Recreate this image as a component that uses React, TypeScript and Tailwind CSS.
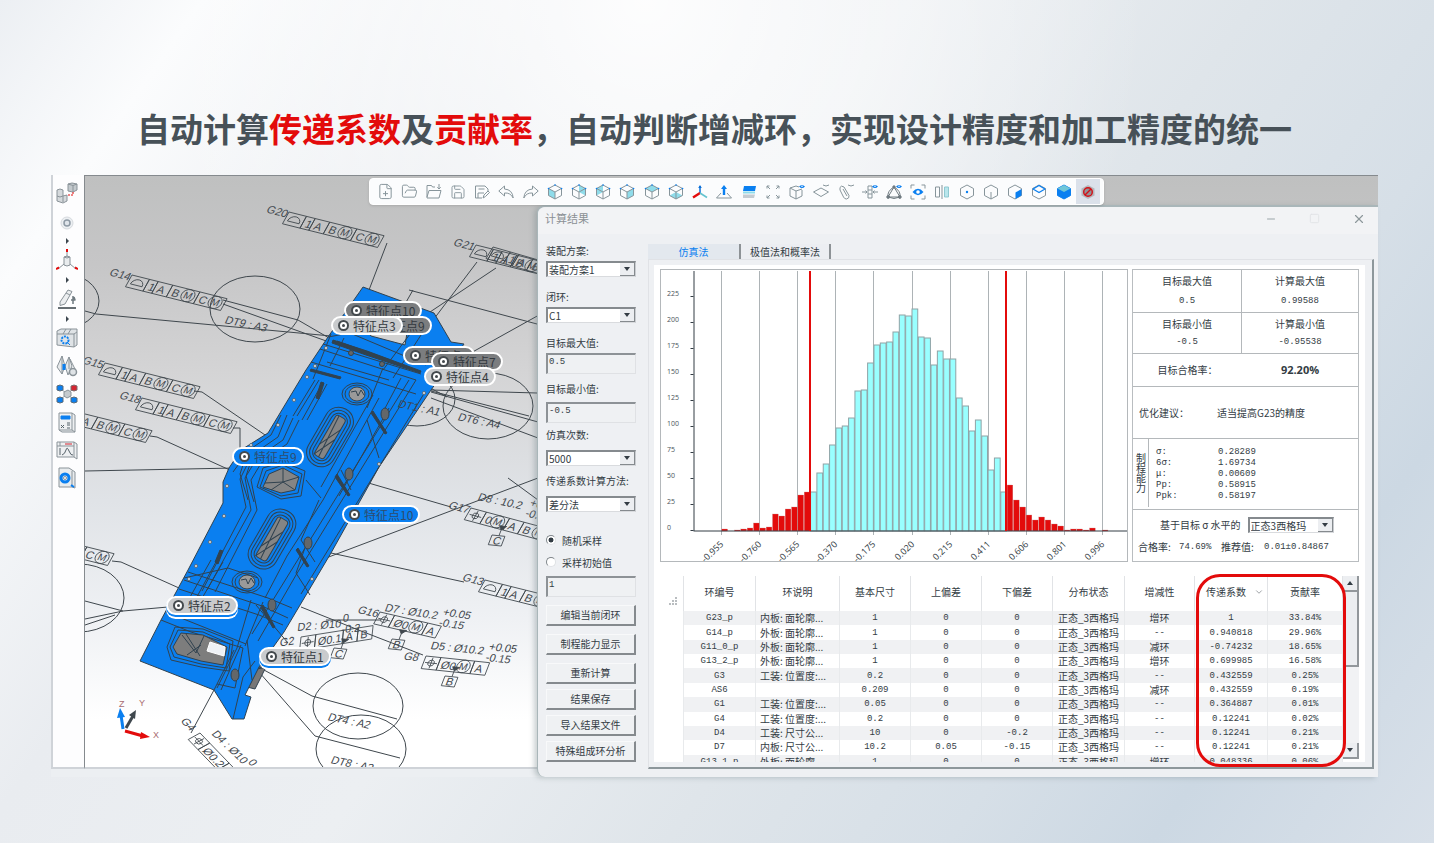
import React, { useState } from "react";
import { ChevronDown, FilePlus, FolderOpen, Save, Minus, Square, X } from "lucide-react";

const HIST = [
  2, 0, 1, 2, 3, 8, 3, 4, 17, 15, 22, 24, 36, 39, 39, 58, 67, 86, 103, 105, 113, 140, 141, 168, 186, 188, 189, 199,
  216, 215, 222, 194, 193, 166, 180, 172, 172, 133, 125, 100, 111, 95, 61, 73, 39, 46, 31, 24, 16, 11, 14, 11, 7, 5, 1,
  2, 2, 1, 3, 0, 1,
];
const X_LABELS = ["-0.955", "-0.760", "-0.565", "-0.370", "-0.175", "0.020", "0.215", "0.411", "0.606", "0.801", "0.996"];
const Y_LABELS = [0, 25, 50, 75, 100, 125, 150, 175, 200, 225];

const COLUMNS = ["环编号", "环说明", "基本尺寸", "上偏差", "下偏差", "分布状态", "增减性", "传递系数", "贡献率"];
const ROWS = [
  ["G23_p", "内板: 面轮廓...", "1", "0", "0", "正态_3西格玛", "增环", "1", "33.84%"],
  ["G14_p", "外板: 面轮廓...", "1", "0", "0", "正态_3西格玛", "--", "0.940818", "29.96%"],
  ["G11_0_p", "外板: 面轮廓...", "1", "0", "0", "正态_3西格玛", "减环", "-0.74232", "18.65%"],
  ["G13_2_p", "外板: 面轮廓...", "1", "0", "0", "正态_3西格玛", "增环", "0.699985", "16.58%"],
  ["G3", "工装: 位置度:...", "0.2", "0", "0", "正态_3西格玛", "--", "0.432559", "0.25%"],
  ["AS6", "", "0.209", "0", "0", "正态_3西格玛", "减环", "0.432559", "0.19%"],
  ["G1", "工装: 位置度:...", "0.05", "0", "0", "正态_3西格玛", "--", "0.364887", "0.01%"],
  ["G4", "工装: 位置度:...", "0.2", "0", "0", "正态_3西格玛", "--", "0.12241", "0.02%"],
  ["D4", "工装: 尺寸公...", "10", "0", "-0.2", "正态_3西格玛", "--", "0.12241", "0.21%"],
  ["D7", "内板: 尺寸公...", "10.2", "0.05", "-0.15", "正态_3西格玛", "--", "0.12241", "0.21%"],
  ["G13_1_p", "外板: 面轮廓...", "1", "0", "0", "正态_3西格玛", "增环", "0.048336", "0.06%"],
];

/* ---------- toolbar icons ---------- */

function Ico({ children }: { children: React.ReactNode }) {
  return (
    <svg viewBox="0 0 16 16" className="h-4 w-4" fill="none" stroke="#87959b" strokeWidth={1} strokeLinejoin="round">
      {children}
    </svg>
  );
}

const HEX = "M8 1 14.5 4.5V11.5L8 15 1.5 11.5V4.5Z";

function Cube({ face }: { face: string }) {
  return (
    <Ico>
      <path d={face} fill="#8fdcea" stroke="none" />
      <path d={HEX} />
      <path d="M1.5 4.5 8 8 14.5 4.5M8 8V15" />
      <path d="M8 1h.1M1.5 4.5h.1M14.5 4.5h.1" stroke="#0a7ff0" strokeWidth={1.6} strokeLinecap="round" />
    </Ico>
  );
}

function Eye() {
  return (
    <>
      <path d="M10 2.5q3-3 6 0q-3 3-6 0Z" fill="#0a7ff0" stroke="none" />
      <circle cx="13" cy="2.3" r=".8" fill="#fff" stroke="none" />
    </>
  );
}

const TOOLS: { name: string; icon: React.ReactNode }[] = [
  { name: "新建", icon: <FilePlus size={17} strokeWidth={1.4} color="#87959b" /> },
  { name: "打开", icon: <FolderOpen size={17} strokeWidth={1.4} color="#87959b" /> },
  {
    name: "导入",
    icon: (
      <Ico>
        <path d="M9 3H6.500L5.500 1.500H1V14h12l2-7.500H3L1 13M13 0v5M11.300 3.300 13 5l1.700-1.700" />
      </Ico>
    ),
  },
  { name: "保存", icon: <Save size={16} strokeWidth={1.4} color="#87959b" /> },
  { name: "另存为", icon: <Ico><path d="M8 14H1.500V2H11l3 3v2M4 14V9h6M4.500 5h6M9 14l1-3 4-4 1.500 1.500-4 4Z" /></Ico> },
  { name: "撤销", icon: <Ico><path d="M6.500 2 .8 7l5.700 5V9q6-.5 8.700 5Q14.500 5.500 6.500 5Z" /></Ico> },
  { name: "重做", icon: <Ico><path d="M9.500 2l5.700 5-5.700 5V9Q3.500 8.500.8 14 1.500 5.500 9.500 5Z" /></Ico> },
  { name: "左视图", icon: <Cube face="M1.5 4.5 8 8V15L1.500 11.500Z" /> },
  { name: "后视图", icon: <Cube face="M8 1 14.500 4.500V11.500L8 8Z" /> },
  { name: "侧视图", icon: <Cube face="M1.500 4.500 8 1V8L1.500 11.500Z" /> },
  { name: "右视图", icon: <Cube face="M14.500 4.500 8 8V15L14.500 11.500Z" /> },
  { name: "俯视图", icon: <Cube face="M8 1 14.500 4.500 8 8 1.500 4.500Z" /> },
  { name: "仰视图", icon: <Cube face="M8 8 14.500 11.500 8 15 1.500 11.500Z" /> },
  {
    name: "坐标系",
    icon: (
      <Ico>
        <path d="M8 9V2" stroke="#0a6fd8" strokeWidth={1.500} />
        <path d="M6.200 4 8 1l1.800 3Z" fill="#0a6fd8" stroke="none" />
        <path d="M8 9 1 13.500" stroke="#e30b0b" strokeWidth={2.400} />
        <path d="M8 9l7 4.500" stroke="#63c3cf" strokeWidth={1.600} />
      </Ico>
    ),
  },
  {
    name: "法向",
    icon: (
      <Ico>
        <path d="M5 9l-4.500 5h15L11 9" />
        <path d="M8 11V3" stroke="#0a7ff0" strokeWidth={2.400} />
        <path d="M5 5 8 1l3 4Z" fill="#0a7ff0" stroke="none" />
      </Ico>
    ),
  },
  {
    name: "剖切",
    icon: (
      <Ico>
        <path d="M3 2h12l-1 5H2Z" fill="#0a7ff0" stroke="none" />
        <path d="M2 7.500h12v2H2Z" fill="#8fdcea" stroke="none" />
        <path d="M2 10.500h12L13 14H2Z" fill="#c5ccd2" stroke="none" />
      </Ico>
    ),
  },
  { name: "全屏", icon: <Ico><path d="M5 5 2 2m0 2.500V2h2.500M11 5l3-3m-2.500 0H14v2.500M5 11l-3 3m0-2.500V14h2.500M11 11l3 3m-2.500 0H14v-2.500" /></Ico> },
  { name: "显示实体", icon: <Ico><path d="M7 2 1 4v8l6 3 6-3V6M1 4l6 3 6-2M7 7v8M7 2l3 1" /><Eye /></Ico> },
  { name: "显示平面", icon: <Ico><path d="M8 4 .5 8 8 12.500 15.500 8Z" /><path d="M10 1q3 2 6 0" /></Ico> },
  { name: "显示连接", icon: <Ico><path d="M2 3.500q1-2.500 4-.5l5 8.500q.5 3-2.500 3.500-2 0-3-2L2 6Z" /><path d="M5 5l4 7M10 1q3 2 6 0" /></Ico> },
  { name: "显示公差", icon: <Ico><path d="M6 2h4v12H6ZM6 6h4M6 10h4M0 8h5M3.500 6.500 5 8 3.500 9.500M16 8h-5M12.500 6.500 11 8l1.500 1.500" /><Eye /></Ico> },
  {
    name: "显示特征",
    icon: (
      <Ico>
        <path d="M8 3 2 13h12ZM2 13Q1 7 8 3q7 4 6 10M2 13q6 3 12 0" stroke="#6f7a80" />
        <g fill="#6f7a80" stroke="#6f7a80"><circle cx="8" cy="3" r="1.200" /><circle cx="2.200" cy="13" r="1.400" /><circle cx="13.800" cy="13" r="1.400" /></g>
        <Eye />
      </Ico>
    ),
  },
  {
    name: "聚焦",
    icon: (
      <Ico>
        <path d="M1 4.500V1h3.500M11.500 1H15v3.500M15 11.500V15h-3.500M4.500 15H1v-3.500" />
        <path d="M2.500 8Q8 1.500 13.500 8 8 14.500 2.500 8Z" fill="#0a7ff0" stroke="none" />
        <circle cx="8" cy="8" r="1.800" fill="#fff" stroke="none" />
      </Ico>
    ),
  },
  {
    name: "镜像",
    icon: (
      <Ico>
        <path d="M1.500 3h4v10h-4ZM8 1v14" />
        <path d="M10.500 3h4v10h-4Z" fill="#b9e6ec" stroke="#8fc9d1" />
      </Ico>
    ),
  },
  { name: "点", icon: <Ico><path d={HEX} /><circle cx="8" cy="8" r="1.200" fill="#0a7ff0" stroke="none" /></Ico> },
  { name: "线", icon: <Ico><path d={HEX} /><path d="M8 8v7" /></Ico> },
  { name: "面", icon: <Ico><path d={HEX} /><path d="M8.500 8.500 14.500 5v6.500l-6 3.500Z" fill="#0a7ff0" stroke="none" /></Ico> },
  { name: "顶面", icon: <Ico><path d={HEX} /><path d="M8 1.500 14 5 8 8.500 2 5Z" stroke="#0a7ff0" strokeWidth={1.300} /></Ico> },
  {
    name: "实体",
    icon: (
      <Ico>
        <path d={HEX} fill="#0a7ff0" stroke="#0a7ff0" />
        <path d="M8 1 14.500 4.500 8 8 1.500 4.500Z" fill="#6fc6d8" stroke="none" />
      </Ico>
    ),
  },
  {
    name: "禁用选择",
    icon: (
      <Ico>
        <path d="M8 1 14.500 4.500v7L8 15l-6.500-3.500v-7Z" fill="#b4b8bc" stroke="none" />
        <circle cx="8" cy="8" r="4.300" fill="#8f9498" stroke="#d40f16" strokeWidth={1.400} />
        <path d="M5 11l6-6" stroke="#d40f16" strokeWidth={1.400} />
      </Ico>
    ),
  },
];

function TopToolbar() {
  return (
    <div className="relative z-10 -ml-[168px] grid h-[27px] w-[735px] grid-cols-[repeat(30,minmax(0,1fr))] rounded-[4px] border border-white bg-[#fbfcfd] px-[3px] shadow-sm">
      {TOOLS.map((t, i) => (
        <button
          key={t.name}
          aria-label={t.name}
          className={`flex items-center justify-center ${i === TOOLS.length - 1 ? "bg-[#dbe1ea]" : ""}`}
        >
          {t.icon}
        </button>
      ))}
    </div>
  );
}

/* ---------- left tool strip ---------- */

function SideIcon({ label, children }: { label: string; children: React.ReactNode }) {
  return (
    <button aria-label={label} className="flex h-7 w-full items-center justify-center">
      <svg viewBox="0 0 22 22" className="h-[22px] w-[22px]" fill="none" stroke="#8a9399" strokeWidth={1} strokeLinejoin="round">
        {children}
      </svg>
    </button>
  );
}

function Flyout() {
  return (
    <span className="flex h-[11px] items-center justify-center">
      <span className="border-y-[3px] border-l-[3px] border-y-transparent border-l-[#3c464e]" />
    </span>
  );
}

function SideBar() {
  return (
    <aside className="mb-2 flex w-[33px] shrink-0 flex-col border-b-2 border-l-2 border-[#cfd3d8] bg-[#fdfdfe] pt-1 pr-[3px]">
      <SideIcon label="装配">
        <path d="M1 8l3-1 3 1v6l4-1v6l-4 2-6-2Z" fill="#d5d9dc" />
        <path d="M7 14l-3 1-3-1M7 20v-6" />
        <path d="M12 2l4-1 5 1v6l-4 2-5-1Z" fill="#c3c9cd" />
        <path d="M12 2l5 1.500L21 2M17 3.500V10" />
        <path d="M17 10v3h-5" stroke="#e30b0b" strokeDasharray="2 1" />
      </SideIcon>
      <SideIcon label="点">
        <circle cx="11" cy="13" r="6" fill="#eceff2" stroke="#d6dade" />
        <circle cx="11" cy="13" r="3" fill="#dfe4ea" stroke="#8e9aa5" strokeWidth={1.500} />
      </SideIcon>
      <Flyout />
      <SideIcon label="坐标">
        <path d="M8 8q3-2 6 0v8q-3 2-6 0Z" fill="#e9ecee" />
        <path d="M8 8q3 2 6 0M11 8V2M8 15l-6 5M14 15l6 5" />
        <path d="M11 0v3M0 20l3-1.500M22 20l-3-1.500" stroke="#e30b0b" strokeWidth={2} />
      </SideIcon>
      <Flyout />
      <SideIcon label="编辑">
        <path d="M4 14 12 2l4 1.500L9 16l-5 1.500Z" fill="#eceef0" />
        <path d="M10 5l4 2" />
        <path d="M2 20h18" stroke="#3f4a50" strokeWidth={1.600} />
        <path d="M17 8v8M15 12h4l-1-3" stroke="#6f7a80" strokeWidth={1.500} />
      </SideIcon>
      <Flyout />
      <SideIcon label="分析">
        <path d="M1 4 5 2h16v16l-3 2L1 18Z" fill="#dfe3e6" />
        <path d="M1 7h17l3-2M18 7v13M7 7l3-5M12 7l3-5" />
        <circle cx="9" cy="13" r="3.500" stroke="#0a7ff0" strokeWidth={2} strokeDasharray="2 1" />
        <path d="M11 15l3 3" stroke="#0a7ff0" />
      </SideIcon>
      <SideIcon label="配合">
        <path d="M6 1 1 12l5 7 3-8ZM13 2l-4 9 3 9 4-9Z" fill="#e6e9eb" />
        <path d="M6 1v18M13 2v12M14 4l5 10" />
        <path d="M8 9v6" stroke="#0a7ff0" strokeWidth={3} />
        <circle cx="17" cy="17" r="3.500" fill="#dfe3e6" strokeWidth={1.500} />
      </SideIcon>
      <SideIcon label="网络">
        <path d="M4 5l14 12M18 5 4 17" />
        <path d="M8 9l4-2 3 2v4l-4 2-3-2Z" fill="#c5cacd" />
        <g fill="#0a7ff0" stroke="#5b6b78">
          <path d="M1 3l3-1 3 1v4l-3 1-3-1ZM1 15l3-1 3 1v4l-3 1-3-1ZM15 15l3-1 3 1v4l-3 1-3-1Z" />
        </g>
        <path d="M15 3l3-1 3 1v4l-3 1-3-1Z" fill="#d32531" stroke="#7c6a6c" />
      </SideIcon>
      <SideIcon label="计算">
        <path d="M3 2h13l3 2v17H6l-3-2Z" fill="#eef0f2" />
        <path d="M16 2v17H3M16 19l3 2" />
        <path d="M5 5h9v3H5Z" fill="#0a7ff0" stroke="#0a7ff0" />
        <path d="M11 12h3M5 17l3-3M5 14l3 3M11 14h3M11 17h3" stroke="#56626a" />
      </SideIcon>
      <SideIcon label="图表">
        <path d="M1 3h17l3 2v15l-3-2H1ZM1 7h17M4 3v4M18 3v15" fill="#eef0f2" />
        <path d="M4 9v7M6 16q3-1 4-5t3 1 4 4" stroke="#56626a" />
        <path d="M9 5h7" stroke="#d32531" />
      </SideIcon>
      <SideIcon label="设置">
        <path d="M3 1h10l6 4v16l-3-1H3Z" fill="#e9ecee" />
        <path d="M16 4v16" />
        <circle cx="9" cy="11" r="4" fill="#d6e6f7" stroke="#0a7ff0" strokeWidth={3} />
        <circle cx="9" cy="11" r="1.500" fill="#fff" />
        <path d="M15 18l3 2" stroke="#0a7ff0" strokeWidth={2} />
      </SideIcon>
    </aside>
  );
}

/* ---------- 3D scene ---------- */

type Cell = [string, number];
const PROFILE: Cell[] = [["⌓", 18], ["1", 9], ["A", 15], ["B M", 28], ["C M", 28]];

/* feature control frame, x/y is the top left corner of the first cell */
function Gdt({ x, y, angle, name, cells }: { x: number; y: number; angle: number; name?: string; cells: Cell[] }) {
  let cx = 0;
  return (
    <g transform={`translate(${x} ${y}) rotate(${angle}) skewX(-15)`}>
      {name && <text x={-21} y={6}>{name}</text>}
      {cells.map(([t, w], i) => {
        const left = cx;
        cx += w;
        const hasM = t.endsWith(" M");
        return (
          <g key={i}>
            <rect x={left} y={0} width={w} height={13} fill="none" />
            {t === "⌓" && <path d={`M${left + 3} 9h12a6 6 0 0 0-12 0Z`} fill="none" />}
            {t === "⌖" && (
              <>
                <circle cx={left + w / 2} cy={6.5} r={3} fill="none" />
                <path d={`M${left + w / 2 - 6} 6.500h12M${left + w / 2} 1v11`} />
              </>
            )}
            {t !== "⌓" && t !== "⌖" && <text x={left + 3} y={11}>{hasM ? t.slice(0, -2) : t}</text>}
            {hasM && (
              <>
                <circle cx={left + w - 9} cy={6.5} r={6.5} fill="none" />
                <text x={left + w - 13} y={10} fontSize={10}>M</text>
              </>
            )}
          </g>
        );
      })}
    </g>
  );
}

function Datum({ x, y, name }: { x: number; y: number; name: string }) {
  return (
    <g transform={`translate(${x} ${y}) rotate(6) skewX(-15)`}>
      <path d="M4-10h7L7-6ZM7-6V0" />
      <rect width={13} height={10} fill="none" />
      <text x={3} y={9}>{name}</text>
    </g>
  );
}

function Dim({ x, y, angle, text, up, low }: { x: number; y: number; angle: number; text: string; up: string; low: string }) {
  const w = text.length * 6 - 3;
  return (
    <g transform={`translate(${x} ${y}) rotate(${angle}) skewX(-12)`}>
      <text>{text}</text>
      <text x={w} y={-5}>{up}</text>
      <text x={w} y={6}>{low}</text>
    </g>
  );
}

/* rounded pocket with nested bend lines round it */
function Pocket({ x, y, w, h, rings, fill = "#858585" }: { x: number; y: number; w: number; h: number; rings: number; fill?: string }) {
  return (
    <g transform={`translate(${x} ${y}) rotate(30)`}>
      {Array.from({ length: rings }, (_, i) => {
        const o = (i + 1) * 3;
        return <rect key={i} x={-w / 2 - o} y={-h / 2 - o} width={w + 2 * o} height={h + 2 * o} rx={5 + o} fill="none" />;
      })}
      <rect x={-w / 2} y={-h / 2} width={w} height={h} rx={3} fill={fill} />
      <path d={`M${-w / 2} ${h / 4}L${w / 2} ${-h / 4}M${-w / 2} ${h / 2}L${w / 2} 0M${-w / 4} ${-h / 2}L0 ${h / 2}`} />
    </g>
  );
}

function Scene() {
  return (
    <svg
      viewBox="0 0 453 594"
      className="h-[594px] w-[453px]"
      fontFamily="'Liberation Sans', Arial, sans-serif"
      fontSize={11}
      role="img"
      aria-label="三维模型"
    >
      <g transform="translate(-84 -176)">
        <g stroke="#3f474d" strokeWidth={1} fill="none">
          <ellipse cx={60} cy={301} rx={38} ry={28} />
          <ellipse cx={254} cy={309} rx={45} ry={33} />
          <ellipse cx={78} cy={598} rx={45} ry={34} />
          <ellipse cx={487} cy={406} rx={45} ry={33} />
          <ellipse cx={416} cy={399} rx={38} ry={27} />
          <ellipse cx={357} cy={706} rx={45} ry={33} />
          <ellipse cx={360} cy={749} rx={45} ry={34} />
          <path d="M84 311 95 314 330 336M222 300 297 320 328 338M222 304 328 342M386 243 368 290M193 391 201 392 267 437M232 428h7v24M149 436l7 1 75 34M84 471l150-3M111 561l9 1 58 26M84 601l38 10 45-4M84 619l38-8M84 625l30-10" />
          <path d="M476 262 408 352M495 268 420 318M408 290l128 34M538 315 450 364M430 390l106 3M430 391l98 25M430 392l107 30M430 398l107 40M340 475l110 32M537 478 325 558M330 553l133 29M300 607l60 24 62 24M263 670l48 26 85 23M258 672l56 64 85 22M213 690 190 733M325 620l55 0M412 290l-8 14" />
          <path d="M507 478l30 22M420 383l26 14" />
        </g>

        {/* sheet metal part */}
        <g stroke="#31424f" strokeWidth={1} strokeLinejoin="round">
          <path d="M250 670l17-3 5-18-14 4ZM246 687l8 2 12-24-16 6Z" fill="#777" />
          <path
            d="M362 287 433 313 450 342 463 344 430 390 378 467 330 553 283 632 258 667 244 695 250 697 243 719H231L213 690 139 661 160 620 187 570 222 503 222 482 228 468 240 450 267 433 305 370 327 337Z"
            fill="#0a7ff0"
          />
          <path d="M366 331l40 2-2 12-34-9Z" fill="#d2d2d2" />
          <g fill="none">
            <path d="M327 337l22-4 76 32M322 344l98 30M319 349l96 31M310 362l60 18 45 14M330 334l-18 45M343 338 329 366M420 335 392 378M412 330l-30 40" />
            <path d="M336 341l56 20M326 362l62 18M382 368l-16 40M415 380l-120 195-38 66M408 380l-120 194-37 60M400 378l-18 34M424 392 300 594" />
            <path d="M378 398l-56 102-36 56-22 42M372 395l-52 92M388 408l-50 88M366 420l12 38M340 470l10 20M305 480l15 18M318 500l-18 40 14 22M305 545l-10 28 14 22" />
            <path d="M280 415l-10 20-22 15-16 22M286 415l-9 22-26 18-12 24 6 28 -44 84M292 418l-10 22-26 18-12 20 6 32-44 80M298 420l-12 24-24 16-12 20 6 30-42 82" />
            <path d="M314 380l-22 36M318 380l-22 36M322 382l-21 38M326 384l-20 36M245 456l-6 18 8 26M251 458l-6 18 8 26" />
            <path d="M187 572l80 26 24 10M183 580l78 26 26 12M178 589l80 26 24 10M183 578l44-10 30 10M210 560l-26 46M216 560l-24 44M222 562l-22 38" />
            <path d="M160 620l30 12 52 16-8 40-18-4M165 612l80 32M240 645l-20 45M250 600l-14 48-20 40M262 602l-18 44M255 605l32 38M246 640l5 40M232 719l10-42 12-16M213 690l20-40" />
          </g>
          <path d="M332 340l34 11 54 20-1 2-54-18-34-12ZM310 369l30 8-1 2-30-8ZM372 411l14 22-2 1-14-21ZM336 474l13 21-2 1-13-19ZM297 548l11 18-2 1-11-17ZM262 605l12 22-2 1-12-20ZM315 398l5-16 3 1-5 16ZM214 562l5-12 3 1-5 13Z" fill="#31424f" />
          <Pocket x={329} y={437} w={11} h={46} rings={3} />
          <Pocket x={271} y={539} w={12} h={46} rings={3} />
          {[0, 3, 6].map((o) => (
            <path key={o} d={`M${268 - o} ${474 - o}L${282} ${468 - o}L${298 + o} ${477 - o}L${294 + o} ${490 + o}L${280} ${493 + o}L${262 - o} ${487}Z`} fill={o ? "none" : "#858585"} />
          ))}
          <path d="M264 483l18-1 12 8M282 482l16-5M282 468v14l-12 8" fill="none" />
          {[[356, 394], [246, 582]].map(([x, y]) => (
            <g key={x}>
              <ellipse cx={x} cy={y} rx={15} ry={11} fill="none" />
              <ellipse cx={x} cy={y} rx={12} ry={9} fill="none" />
              <ellipse cx={x} cy={y} rx={8} ry={7} fill="#9a9a9a" />
              <path d={`M${x - 6} ${y - 2}l5-1 2 5 3-6 3 5`} fill="none" />
            </g>
          ))}
          {[0, 3, 6].map((o) => (
            <path key={o} d={`M${172 - o} ${647}L${180 - o} ${633 - o}L${202} ${635 - o}L${226 + o} ${647 - o}L${222 + o} ${665 + o}L${200} ${661 + o}L${176 - o} ${654 + o}Z`} fill={o ? "none" : "#7d7d7d"} />
          ))}
          <path d="M181 635l14 18M185 634l14 22M195 653l8-17M186 655l14-10" fill="none" />
          <path d="M209 642l15 5-1 9-17-5Z" fill="#eef1f5" stroke="#fff" />
          {[[384, 414], [348, 474], [307, 543], [271, 605], [234, 675]].map(([x, y]) => (
            <ellipse key={x} cx={x} cy={y} rx={4} ry={6} fill="#63676a" />
          ))}
          <circle cx={350} cy={353} r={2.5} fill="#666" />
          <circle cx={381} cy={364} r={2.5} fill="#666" />
          <g fill="#e8eef5" stroke="#5b6a75">
            {[[325, 348], [314, 366], [306, 377], [293, 400], [277, 425], [250, 445], [226, 486], [223, 516], [209, 542], [195, 566], [188, 579], [423, 393], [378, 464], [311, 579]].map(([x, y]) => (
              <circle key={y} cx={x} cy={y} r={1.5} />
            ))}
          </g>
        </g>

        {/* tolerance annotations */}
        <g fill="#3f474d">
          <g stroke="#3f474d" strokeWidth={0.8}>
            <g className="[&_text]:stroke-none">
              <Gdt x={288} y={212} angle={14} name="G20" cells={PROFILE} />
              <Gdt x={131} y={275} angle={14} name="G14" cells={PROFILE} />
              <Gdt x={104} y={363} angle={14} name="G15" cells={PROFILE} />
              <Gdt x={141} y={398} angle={14} name="G18" cells={PROFILE} />
              <Gdt x={56} y={407} angle={14} cells={PROFILE} />
              <Gdt x={18} y={530} angle={14} cells={PROFILE} />
              <Gdt x={475} y={245} angle={14} name="G21" cells={PROFILE} />
              <Gdt x={492} y={247} angle={16} cells={PROFILE} />
              <Gdt x={484} y={580} angle={14} name="G13" cells={PROFILE} />
              <Gdt x={470} y={508} angle={15} name="G17" cells={[["⌖", 16], ["0 M", 24], ["A", 15], ["B M", 28]]} />
              <Gdt x={379} y={612} angle={13} name="G16" cells={[["⌖", 15], ["Ø0 M", 34], ["A", 14]]} />
              <Gdt x={425} y={656} angle={6} name="G8" cells={[["⌖", 15], ["Ø0 M", 34], ["A", 15]]} />
              <Gdt x={300} y={637} angle={-9} name="G2" cells={[["⌖", 15], ["Ø0.1", 28], ["A", 15], ["B", 15]]} />
              <Gdt x={199} y={733} angle={46} name="G4" cells={[["⌖", 14], ["Ø0.2", 28], ["A", 15]]} />
              <Datum x={491} y={535} name="C" />
              <Datum x={391} y={639} name="B" />
              <Datum x={444} y={676} name="B" />
              <Datum x={333} y={648} name="C" />
            </g>
          </g>
          <Dim x={476} y={500} angle={12} text="D8 : 10.2" up="+0.2" low="-0.1" />
          <Dim x={383} y={611} angle={9} text="D7 : Ø10.2" up="+0.05" low="-0.15" />
          <Dim x={429} y={649} angle={6} text="D5 : Ø10.2" up="+0.05" low="-0.15" />
          <Dim x={296} y={631} angle={-5} text="D2 : Ø10" up="0" low="-0.2" />
          <Dim x={210} y={734} angle={44} text="D4 : Ø10" up="0" low="-0" />
          <g transform="translate(223 323) rotate(12) skewX(-12)"><text>DT9 : A3</text></g>
          <g transform="translate(456 420) rotate(12) skewX(-12)"><text>DT6 : A4</text></g>
          <g transform="translate(396 407) rotate(12) skewX(-12)"><text>DT1 : A1</text></g>
          <g transform="translate(326 720) rotate(12) skewX(-12)"><text>DT4 : A2</text></g>
          <g transform="translate(329 763) rotate(12) skewX(-12)"><text>DT8 : A2</text></g>
        </g>

        {/* axis triad */}
        <path d="M122 729l-2-14" stroke="#0a7ff0" strokeWidth={3} />
        <path d="M116 718l3-10 5 9Z" fill="#0a7ff0" />
        <path d="M125 728l7-12" stroke="#3f474d" strokeWidth={3} />
        <path d="M128 715l7-5-1 9Z" fill="#3f474d" />
        <path d="M124 731l18 5" stroke="#e30b0b" strokeWidth={3} />
        <path d="M140 732l9 5-10 2Z" fill="#e30b0b" />
        <g fontSize={9} fill="#a86b70">
          <text x={118} y={707}>Z</text>
          <text x={138} y={706}>Y</text>
          <text x={152} y={738}>X</text>
        </g>
      </g>
    </svg>
  );
}

const CHIP_STYLES = {
  dark: "bg-[#7b7d7f] text-[#33393e]",
  light: "bg-[#c9cbcd] text-[#33393e]",
  blue: "bg-[#0a7ff0] text-[#2e4c6d]",
  lifted: "bg-[#c9cbcd] text-[#33393e] shadow-[0_2px_0_#0a7ff0,0_4px_0_#ffffff]",
};

/* positions are in the scene's own pixels */
const CHIPS: { text: string; x: number; y: number; kind: keyof typeof CHIP_STYLES }[] = [
  { text: "特征点10", x: 259, y: 125, kind: "dark" },
  { text: "特征点9", x: 275, y: 140, kind: "dark" },
  { text: "特征点3", x: 246, y: 140, kind: "light" },
  { text: "特征点1", x: 318, y: 170, kind: "dark" },
  { text: "特征点7", x: 346, y: 176, kind: "dark" },
  { text: "特征点4", x: 339, y: 191, kind: "light" },
  { text: "特征点9", x: 147, y: 271, kind: "blue" },
  { text: "特征点10", x: 257, y: 329, kind: "blue" },
  { text: "特征点2", x: 81, y: 420, kind: "lifted" },
  { text: "特征点1", x: 174, y: 471, kind: "lifted" },
];

function Chip({ text, x, y, kind }: (typeof CHIPS)[number]) {
  return (
    <span
      className={`absolute flex h-[19px] items-center gap-1 rounded-full border-2 border-white px-[5px] text-[12px] leading-none whitespace-nowrap ${CHIP_STYLES[kind]}`}
      style={{ left: x, top: y }}
    >
      <span className="flex h-[11px] w-[11px] items-center justify-center rounded-full border-2 border-[#43494d] bg-white">
        <span className="h-[3px] w-[3px] rounded-full bg-[#43494d]" />
      </span>
      {text}
    </span>
  );
}

/* ---------- result dialog ---------- */

function SelectBox({ id, options, label }: { id: string; options: string[]; label?: string }) {
  return (
    <div className="grid h-4 border-t-2 border-l-2 border-r border-b border-[#858a8e] border-r-[#c9ccd0] border-b-[#d9dbde] bg-white">
      <select
        id={id}
        aria-label={label}
        className="col-start-1 row-start-1 h-[13px] w-full appearance-none bg-transparent pl-px text-[10px] leading-[13px] text-[#333c44] outline-none"
      >
        {options.map((o) => (
          <option key={o}>{o}</option>
        ))}
      </select>
      <span className="pointer-events-none col-start-1 row-start-1 flex w-[15px] items-center justify-center justify-self-end border-r border-b border-[#858a8e] bg-[#eceef1]">
        <span className="border-x-[3px] border-t-4 border-x-transparent border-t-[#333c44]" />
      </span>
    </div>
  );
}

function Field({ id, value, onChange, label }: { id: string; value: string; onChange: (v: string) => void; label?: string }) {
  return (
    <input
      id={id}
      aria-label={label}
      value={value}
      onChange={(e) => onChange(e.target.value)}
      className="block h-[21px] w-full shrink-0 border-t-2 border-l-2 border-r border-b border-[#8d9296] border-r-[#dfe1e4] border-b-[#dfe1e4] bg-[#eff1f3] px-px pb-1 font-['Liberation_Mono',monospace] text-[9px] text-[#333c44] outline-none"
    />
  );
}

function PushButton({ children }: { children: React.ReactNode }) {
  return (
    <button className="h-[21px] border-t border-l border-r-2 border-b-2 border-t-[#f8f9fa] border-r-[#858a8e] border-b-[#858a8e] border-l-[#f8f9fa] bg-[#eff1f3] text-[10px] leading-[16px] text-[#333c44]">
      {children}
    </button>
  );
}

function ParamPanel() {
  const [max, setMax] = useState("0.5");
  const [min, setMin] = useState("-0.5");
  const [seed, setSeed] = useState("1");
  const [mode, setMode] = useState("random");

  return (
    <form className="w-[90px] shrink-0 pt-[9px] text-[10px] text-[#333c44]" onSubmit={(e) => e.preventDefault()}>
      <div className="grid auto-rows-[46px]">
        <div className="flex flex-col gap-[3px]">
          <label htmlFor="scheme" className="leading-[15px]">装配方案:</label>
          <SelectBox id="scheme" options={["装配方案1"]} />
        </div>
        <div className="flex flex-col gap-[3px]">
          <label htmlFor="loop" className="leading-[15px]">闭环:</label>
          <SelectBox id="loop" options={["C1"]} />
        </div>
        <div className="flex flex-col gap-[3px]">
          <label htmlFor="tmax" className="leading-[15px]">目标最大值:</label>
          <Field id="tmax" value={max} onChange={setMax} />
        </div>
        <div className="flex flex-col gap-[6px]">
          <label htmlFor="tmin" className="leading-[15px]">目标最小值:</label>
          <Field id="tmin" value={min} onChange={setMin} />
        </div>
        <div className="flex flex-col gap-[8px]">
          <label htmlFor="times" className="leading-[15px]">仿真次数:</label>
          <SelectBox id="times" options={["5000", "10000"]} />
        </div>
        <div className="flex flex-col gap-[8px]">
          <label htmlFor="method" className="leading-[15px] whitespace-nowrap">传递系数计算方法:</label>
          <SelectBox id="method" options={["差分法"]} />
        </div>
      </div>
      <div className="mt-[10px] mb-[3px]">
        {[["random", "随机采样"], ["initial", "采样初始值"]].map(([v, t]) => (
          <label key={v} className="flex h-[22px] items-center gap-[6px]">
            <input
              type="radio"
              name="sampling"
              checked={mode === v}
              onChange={() => setMode(v)}
              className="h-[10px] w-[10px] appearance-none rounded-full border border-[#7f858a] border-r-[#dfe1e4] border-b-[#dfe1e4] bg-white checked:bg-[radial-gradient(#333c44_40%,#ffffff_48%)]"
            />
            {t}
          </label>
        ))}
      </div>
      <Field id="seed" label="采样初始值" value={seed} onChange={setSeed} />
      <div className="mt-2 grid gap-2">
        <PushButton>编辑当前闭环</PushButton>
        <PushButton>制程能力显示</PushButton>
        <PushButton>重新计算</PushButton>
      </div>
      <div className="mt-[5px] grid gap-[5px]">
        <PushButton>结果保存</PushButton>
        <PushButton>导入结果文件</PushButton>
        <PushButton>特殊组成环分析</PushButton>
      </div>
    </form>
  );
}

function Histogram() {
  const base = 261;
  const x0 = 61.3;
  const step = 6.34;
  return (
    <svg viewBox="0 0 466 291" className="block w-full" fontFamily="'Open Sans', 'Noto Sans', sans-serif" role="img" aria-label="仿真直方图">
      {X_LABELS.map((t, i) => {
        const x = Math.round(x0 + i * step * 6);
        return (
          <g key={t}>
            <path d={`M${x - 0.5} 1V${base + 4}`} stroke="#adb3b6" />
            <text transform={`translate(${x + 2} ${base + 14}) rotate(-43)`} textAnchor="end" fontSize={9} fill="#333c44">{t}</text>
          </g>
        );
      })}
      {HIST.map((h, i) => {
        if (!h) return null;
        const red = i < 14 || i > 44;
        return (
          <rect
            key={i}
            x={x0 - 0.5 + i * step}
            y={base - h}
            width={step - 0.6}
            height={h}
            fill={red ? "#e30b0b" : "#99ffff"}
            stroke={red ? "#c98a8a" : "#8fa3a6"}
            strokeWidth={red ? 0.3 : 1}
          />
        );
      })}
      {Y_LABELS.map((v, i) => (
        <g key={v}>
          <path d={`M29.500 ${base - i * 26 - 0.5}h3`} stroke="#333c44" />
          <text x={6} y={base - i * 26 - 1} fontSize={7} fill="#4a5359">{v}</text>
        </g>
      ))}
      <path d={`M33 1V${base}M32.500 ${base}H466`} stroke="#333c44" fill="none" />
      <path d={`M149 1V${base}M345 1V${base}`} stroke="#e30b0b" strokeWidth={2} />
    </svg>
  );
}

function StatPair({ name, value }: { name: string; value: string }) {
  return (
    <div className="flex flex-col justify-between py-[4px] text-center">
      <span className="leading-[14px]">{name}</span>
      <span className="font-['Liberation_Mono',monospace] text-[9px] leading-[14px]">{value}</span>
    </div>
  );
}

function StatsPanel() {
  return (
    <div className="flex w-[227px] shrink-0 flex-col border border-[#b9bdc0] text-[10px] leading-[14px] text-[#333c44]">
      <div className="grid h-[43px] grid-cols-[109px_1fr] divide-x divide-[#b4b8bb] border-b border-[#b4b8bb]">
        <StatPair name="目标最大值" value="0.5" />
        <StatPair name="计算最大值" value="0.99588" />
      </div>
      <div className="grid h-[41px] grid-cols-[109px_1fr] divide-x divide-[#b4b8bb] border-b border-[#b4b8bb]">
        <StatPair name="目标最小值" value="-0.5" />
        <StatPair name="计算最小值" value="-0.95538" />
      </div>
      <div className="grid h-[33px] grid-cols-[109px_1fr] items-center border-b border-[#b4b8bb] text-center">
        <span>目标合格率：</span>
        <span className="font-['Open_Sans',sans-serif] text-[11px] font-bold">92.20%</span>
      </div>
      <div className="flex h-[52px] items-center gap-7 border-b border-[#b4b8bb] pl-[6px]">
        <span>优化建议：</span>
        <span>适当提高G23的精度</span>
      </div>
      <div className="flex h-[71px] border-b border-[#b4b8bb]">
        <span className="my-px mb-[2px] flex w-[15px] items-center justify-center border-r border-[#b4b8bb] leading-[13px] [writing-mode:vertical-rl]">
          制程能力
        </span>
        <dl className="grid grid-cols-[62px_auto] content-center pl-[6px] font-['Liberation_Mono','Noto_Sans_CJK_SC',monospace] text-[9px] leading-[11px]">
          <dt>σ:</dt><dd>0.28289</dd>
          <dt>6σ:</dt><dd>1.69734</dd>
          <dt>μ:</dt><dd>0.00609</dd>
          <dt>Pp:</dt><dd>0.58915</dd>
          <dt>Ppk:</dt><dd>0.58197</dd>
        </dl>
      </div>
      <div className="flex flex-1 flex-col justify-evenly">
        <div className="flex items-center gap-[7px] pl-[27px]">
          <label htmlFor="sigma">基于目标 σ 水平的</label>
          <div className="w-[86px]">
            <SelectBox id="sigma" options={["正态3西格玛"]} />
          </div>
        </div>
        <div className="flex pl-[5px] whitespace-pre">
          <span className="w-[41px]">合格率:</span>
          <span className="w-[42px] font-['Liberation_Mono',monospace] text-[9px]">74.69%</span>
          <span className="w-[43px]">推荐值:</span>
          <span className="font-['Liberation_Mono',monospace] text-[9px]">0.01±0.84867</span>
        </div>
      </div>
    </div>
  );
}

const isCjk = (s: string) => /[\u4e00-\u9fff]/.test(s);

function RingTable() {
  return (
    <div className="relative mt-[14px] flex h-[186px]">
      <div className="flex w-[23px] shrink-0 items-start pt-[21px] pl-[9px]">
        <svg viewBox="0 0 9 9" className="h-[9px] w-[9px]" fill="#b9bdc0">
          <path d="M6 0h2v2H6ZM3 3h2v2H3ZM6 3h2v2H6ZM0 6h2v2H0ZM3 6h2v2H3ZM6 6h2v2H6Z" />
        </svg>
      </div>
      <div className="min-w-0 flex-1 overflow-hidden">
        <table className="h-[193px] w-full table-fixed border-collapse text-center text-[10px] text-[#333c44]">
          <colgroup>
            <col className="w-[72px]" />
            <col className="w-[84px]" />
            <col className="w-[71px]" />
            <col className="w-[71px]" />
            <col className="w-[71px]" />
            <col className="w-[72px]" />
            <col className="w-[70px]" />
            <col className="w-[73px]" />
            <col className="w-[75px]" />
          </colgroup>
          <thead>
            <tr className="h-[35px]">
              {COLUMNS.map((c) => (
                <th key={c} className="border-x border-[#e1e3e6] p-0 pb-1 font-normal">
                  {c === "传递系数" ? (
                    <button className="inline-flex items-center gap-2 pl-2">
                      {c}
                      <ChevronDown size={10} strokeWidth={2} color="#8d9296" />
                    </button>
                  ) : (
                    c
                  )}
                </th>
              ))}
            </tr>
          </thead>
          <tbody>
            {ROWS.map((r) => (
              <tr key={r[0]} className="odd:bg-[#f0f1f3]">
                {r.map((v, i) => (
                  <td
                    key={i}
                    className={`overflow-hidden border-x border-[#e8eaec] p-0 leading-[12px] whitespace-nowrap ${i === 1 ? "pl-[4px] text-left" : ""} ${
                      isCjk(v) ? "" : "font-['Liberation_Mono',monospace] text-[9px]"
                    }`}
                  >
                    {v}
                  </td>
                ))}
              </tr>
            ))}
          </tbody>
        </table>
      </div>
      <div className="mb-[3px] flex w-4 shrink-0 flex-col bg-[#f1f2f4]">
        <button aria-label="向上滚动" className="flex h-4 items-center justify-center border-r-2 border-b-2 border-[#92979b] bg-[#eceef1]">
          <span className="border-x-[3px] border-b-4 border-x-transparent border-b-[#333c44]" />
        </button>
        <div className="h-[75px] border-r-2 border-b-2 border-[#92979b] bg-[#eceef1]" />
        <button aria-label="向下滚动" className="mt-auto flex h-4 items-center justify-center border-r-2 border-b-2 border-[#92979b] bg-[#eceef1]">
          <span className="border-x-[3px] border-t-4 border-x-transparent border-t-[#333c44]" />
        </button>
      </div>
      {/* highlight over the last two columns */}
      <div className="pointer-events-none absolute -top-[2px] right-[13px] -bottom-[5px] w-[150px] rounded-[24px] border-[3px] border-[#e30b0b]" />
    </div>
  );
}

function ResultDialog() {
  const [tab, setTab] = useState(0);
  return (
    <section className="relative rounded-l-[8px] border-t-2 border-l border-[#a9b6b9] bg-[#eef0f3] pb-2 shadow-[-3px_1px_5px_rgba(110,125,130,0.35)]">
      <header className="flex h-[27px] items-center justify-between rounded-tl-[8px] bg-[#f2f3f5] pr-3 pb-1 pl-[7px]">
        <h2 className="text-[11px] text-[#8b9094]">计算结果</h2>
        <div className="flex items-center gap-8">
          <button aria-label="最小化"><Minus size={12} strokeWidth={2} color="#9aa5a9" /></button>
          <button aria-label="最大化"><Square size={11} strokeWidth={2} color="#e0e2e6" /></button>
          <button aria-label="关闭"><X size={14} strokeWidth={2} color="#8d979b" /></button>
        </div>
      </header>
      <div className="flex gap-3 pr-1 pl-2">
        <ParamPanel />
        <div className="min-w-0 flex-1 pt-[10px]">
          <div className="flex h-[15px] text-[10px] leading-[14px]">
            {["仿真法", "极值法和概率法"].map((t, i) => (
              <button
                key={t}
                onClick={() => setTab(i)}
                className={`border-r-2 border-[#8d9296] ${i === 0 ? "w-[93px]" : "w-[90px]"} ${
                  tab === i ? "bg-[#e3e8ee] text-[#0a7ff0]" : "bg-[#eceef2] text-[#333c44]"
                }`}
              >
                {t}
              </button>
            ))}
          </div>
          <div className="border-t border-r-2 border-b-2 border-l border-[#e0e2e6] border-r-[#8d979b] border-b-[#8d979b] py-[5px] pr-[7px] pl-[5px]">
            <div className="bg-white pt-1 pr-[6px] pl-[6px]">
              <div className="flex gap-1">
                <div className="min-w-0 flex-1 border border-[#b4b8bb]">
                  <Histogram />
                </div>
                <StatsPanel />
              </div>
              <RingTable />
            </div>
          </div>
        </div>
      </div>
    </section>
  );
}

function App(): React.ReactElement {
  return (
    <main className="min-h-screen bg-[radial-gradient(ellipse_at_45%_0%,rgba(255,255,255,0.9)_0%,rgba(255,255,255,0)_45%),linear-gradient(125deg,#eceff3_0%,#fbfcfd_10%,#e9ecf0_28%,#eceff2_45%,#dfe5ea_62%,#d6dfe7_76%,#ccd8e3_86%,#d8e0e9_100%)] pr-14 pb-10 pl-[51px] font-['Noto_Sans_CJK_SC','Noto_Sans',sans-serif]">
      <h1 className="pt-[104px] pb-[23px] text-center text-[33px] leading-[48px] font-bold text-[#475158]">
        自动计算<span className="text-[#e30b0b]">传递系数</span>及<span className="text-[#e30b0b]">贡献率</span>
        ，自动判断增减环，实现设计精度和加工精度的统一
      </h1>
      <div className="flex bg-[#eceff2]">
        <SideBar />
        <div className="relative min-w-0 flex-1 pt-[3px] pl-[453px]">
          <div className="absolute inset-x-0 top-0 bottom-2 overflow-hidden border-t border-b-2 border-l border-[#858a8e] border-b-[#cfd3d8] bg-[linear-gradient(180deg,#bfc0c0_0%,#c6c6c7_15%,#d4d4d5_33%,#e0e3e7_55%,#eff1f4_75%,#ffffff_92%)]">
            <Scene />
            {CHIPS.map((c, i) => (
              <Chip key={i} {...c} />
            ))}
          </div>
          <TopToolbar />
          <ResultDialog />
        </div>
      </div>
    </main>
  );
}

export default App;
